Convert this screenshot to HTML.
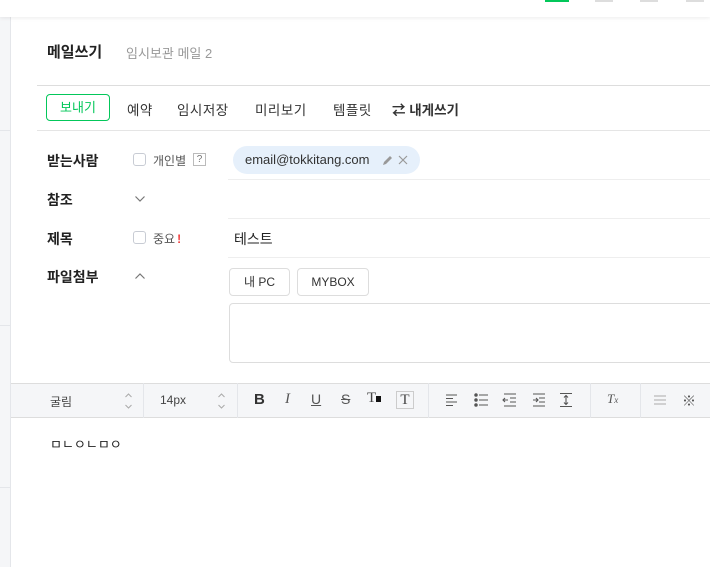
<!DOCTYPE html>
<html><head><meta charset="utf-8"><style>
*{margin:0;padding:0;box-sizing:border-box}
body{width:710px;height:567px;overflow:hidden;background:#fff;font-family:"Liberation Sans","Noto Sans CJK KR",sans-serif;position:relative;color:#222}
.a{position:absolute;white-space:nowrap}
.top{left:0;top:0;width:710px;height:17px;background:#fff;box-shadow:0 1px 4px rgba(0,0,0,.08);z-index:2}
.side{left:0;top:17px;width:11px;height:550px;background:#f5f6f8;border-right:1px solid #e4e6ea}
.hl{height:1px;background:#e5e5e5}
.lbl{font-size:14px;font-weight:bold;color:#222}
.cb{width:13px;height:13px;border:1px solid #c8ccd4;border-radius:3px;background:#fff}
.btn{border:1px solid #ddd;border-radius:4px;font-size:12px;color:#333;text-align:center;line-height:26px;height:28px}
.tb{font-size:13.5px;color:#333;letter-spacing:.5px}
.sep{width:1px;height:35px;background:#e4e6ea;top:383px}
</style></head><body>
<div class="a top"></div>
<div class="a" style="left:545px;top:0;width:24px;height:2px;background:#03c75a;z-index:3"></div>
<div class="a" style="left:595px;top:0;width:18px;height:2px;background:#ddd;z-index:3"></div>
<div class="a" style="left:640px;top:0;width:18px;height:2px;background:#ddd;z-index:3"></div>
<div class="a" style="left:686px;top:0;width:18px;height:2px;background:#ddd;z-index:3"></div>
<div class="a side"></div>
<div class="a" style="left:0;top:130px;width:10px;height:1px;background:#e4e6ea"></div>
<div class="a" style="left:0;top:325px;width:10px;height:1px;background:#e4e6ea"></div>
<div class="a" style="left:0;top:487px;width:10px;height:1px;background:#e4e6ea"></div>

<div class="a" style="left:47px;top:41px;font-size:15px;font-weight:bold">메일쓰기</div>
<div class="a" style="left:126px;top:43px;font-size:13px;color:#999">임시보관 메일 2</div>
<div class="a hl" style="left:37px;top:85px;width:673px;background:#ddd"></div>

<div class="a" style="left:46px;top:94px;width:64px;height:27px;border:1px solid #03c75a;border-radius:4px;color:#03c75a;font-size:13px;text-align:center;line-height:25px">보내기</div>
<div class="a tb" style="left:127px;top:99px">예약</div>
<div class="a tb" style="left:177px;top:99px">임시저장</div>
<div class="a tb" style="left:255px;top:99px">미리보기</div>
<div class="a tb" style="left:333px;top:99px">템플릿</div>
<div class="a tb" style="left:392px;top:99px;font-weight:bold;letter-spacing:0">⇄ 내게쓰기</div>
<div class="a hl" style="left:37px;top:130px;width:673px"></div>

<div class="a lbl" style="left:47px;top:151px">받는사람</div>
<div class="a cb" style="left:133px;top:153px"></div>
<div class="a" style="left:153px;top:152px;font-size:12px;color:#555">개인별</div>
<div class="a" style="left:193px;top:153px;width:13px;height:13px;border:1px solid #bbb;font-size:10px;line-height:11px;text-align:center;color:#777">?</div>
<div class="a" style="left:233px;top:146px;width:187px;height:28px;background:#e6f0fb;border-radius:14px"></div>
<div class="a" style="left:245px;top:152px;font-size:13px;color:#333">email@tokkitang.com</div>
<svg class="a" style="left:381px;top:154px" width="30" height="12" viewBox="0 0 30 12"><path d="M2 11 L3 8 L9 2 L11 4 L5 10 Z" fill="#999"/><path d="M18 2 L26 10 M26 2 L18 10" stroke="#999" stroke-width="1.2"/></svg>
<div class="a hl" style="left:228px;top:179px;width:482px;background:#eee"></div>

<div class="a lbl" style="left:47px;top:190px">참조</div>
<svg class="a" style="left:134px;top:195px" width="12" height="8" viewBox="0 0 12 8"><path d="M1.5 1.5 L6 6 L10.5 1.5" fill="none" stroke="#777" stroke-width="1.2"/></svg>
<div class="a hl" style="left:228px;top:218px;width:482px;background:#eee"></div>

<div class="a lbl" style="left:47px;top:229px">제목</div>
<div class="a cb" style="left:133px;top:231px"></div>
<div class="a" style="left:153px;top:230px;font-size:12px;color:#555">중요<span style="color:#f03e3e;font-weight:bold;margin-left:2px">!</span></div>
<div class="a" style="left:234px;top:229px;font-size:14px;color:#222">테스트</div>
<div class="a hl" style="left:228px;top:257px;width:482px;background:#eee"></div>

<div class="a lbl" style="left:47px;top:267px">파일첨부</div>
<svg class="a" style="left:134px;top:272px" width="12" height="8" viewBox="0 0 12 8"><path d="M1.5 6.5 L6 2 L10.5 6.5" fill="none" stroke="#777" stroke-width="1.2"/></svg>
<div class="a btn" style="left:229px;top:268px;width:61px">내 PC</div>
<div class="a btn" style="left:297px;top:268px;width:72px">MYBOX</div>
<div class="a" style="left:229px;top:303px;width:490px;height:60px;border:1px solid #ddd;border-radius:4px"></div>

<div class="a" style="left:11px;top:383px;width:699px;height:35px;background:#f5f6f8;border-top:1px solid #ddd;border-bottom:1px solid #ddd"></div>
<div class="a sep" style="left:143px"></div>
<div class="a sep" style="left:237px"></div>
<div class="a sep" style="left:428px"></div>
<div class="a sep" style="left:590px"></div>
<div class="a sep" style="left:640px"></div>
<div class="a" style="left:50px;top:393px;font-size:12px;color:#444">굴림</div>
<svg class="a" style="left:124px;top:392px" width="9" height="18" viewBox="0 0 9 18"><path d="M1.5 5 L4.5 2 L7.5 5 M1.5 13 L4.5 16 L7.5 13" fill="none" stroke="#aaa"/></svg>
<div class="a" style="left:160px;top:393px;font-size:12px;color:#444">14px</div>
<svg class="a" style="left:217px;top:392px" width="9" height="18" viewBox="0 0 9 18"><path d="M1.5 5 L4.5 2 L7.5 5 M1.5 13 L4.5 16 L7.5 13" fill="none" stroke="#aaa"/></svg>
<div class="a" style="left:254px;top:391px;font-size:15px;font-weight:bold;color:#333">B</div>
<div class="a" style="left:285px;top:391px;font-size:15px;font-style:italic;color:#555;font-family:'Liberation Serif'">I</div>
<div class="a" style="left:311px;top:391px;font-size:14px;text-decoration:underline;color:#555">U</div>
<div class="a" style="left:341px;top:391px;font-size:14px;text-decoration:line-through;color:#555">S</div>
<div class="a" style="left:367px;top:390px;font-size:15px;color:#444;font-family:'Liberation Serif'">T<span style="display:inline-block;width:5px;height:6px;background:#111"></span></div>
<div class="a" style="left:396px;top:391px;width:18px;height:18px;border:1px solid #ccc;font-size:15px;line-height:16px;text-align:center;color:#444;font-family:'Liberation Serif'">T</div>
<svg class="a" style="left:444px;top:392px" width="136" height="16" viewBox="0 0 136 16" fill="none" stroke="#555" stroke-width="1.1">
<path d="M2 3 H13 M2 6.5 H9 M2 10 H13 M2 13.5 H9"/>
<circle cx="32" cy="3" r="1.2" fill="#555"/><circle cx="32" cy="8" r="1.2" fill="#555"/><circle cx="32" cy="13" r="1.2" fill="#555"/>
<path d="M35 3 H44 M35 8 H44 M35 13 H44"/>
<path d="M60 2 H72 M66 6 H72 M66 10 H72 M60 14 H72 M64 8 H59 M61 6 L59 8 L61 10"/>
<path d="M89 2 H101 M95 6 H101 M95 10 H101 M89 14 H101 M89 8 H94 M92 6 L94 8 L92 10"/>
<path d="M116 1.5 H128 M116 14.5 H128 M122 3.5 V12.5 M120 5.5 L122 3.5 L124 5.5 M120 10.5 L122 12.5 L124 10.5"/>
</svg>
<div class="a" style="left:607px;top:391px;font-size:13px;font-style:italic;color:#555;font-family:'Liberation Serif'">T<span style="font-size:9px">x</span></div>
<svg class="a" style="left:653px;top:393px" width="14" height="14" viewBox="0 0 14 14"><path d="M1 3 H13 M1 7 H13 M1 11 H13" stroke="#aaa" stroke-width="1.1"/></svg>
<div class="a" style="left:682px;top:391px;font-size:14px;color:#555">※</div>

<div class="a" style="left:50px;top:434px;font-size:13px;color:#222;font-family:'Noto Sans CJK KR',sans-serif">ㅁㄴㅇㄴㅁㅇ</div>
</body></html>
